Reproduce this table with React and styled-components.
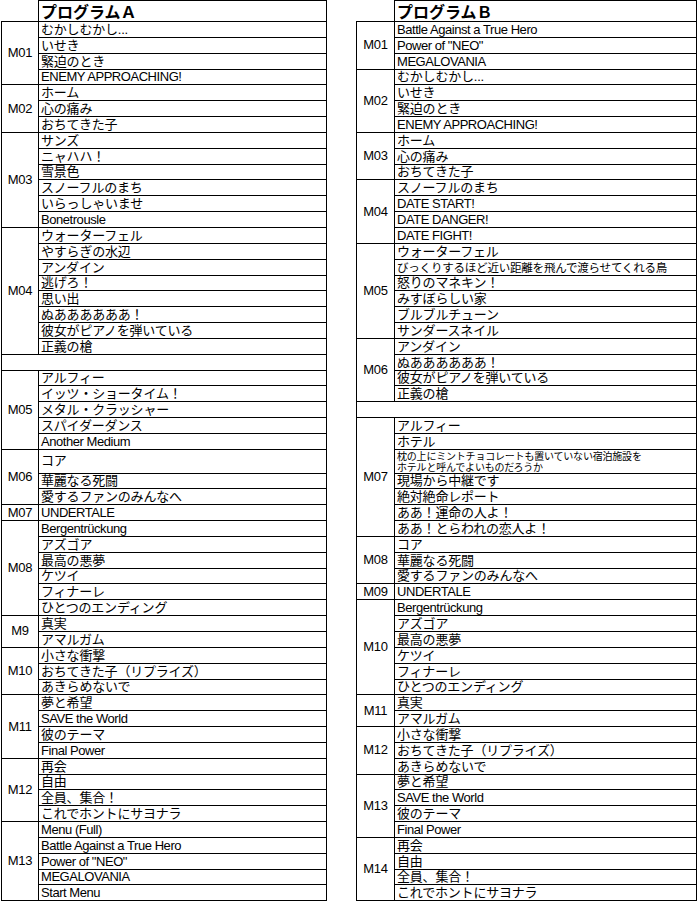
import React from "react";
import styled, { createGlobalStyle } from "styled-components";

const ROW = 15.85;

const GlobalStyle = createGlobalStyle`
  html, body {
    margin: 0;
    background: #fff;
  }
  body {
    font-family: "Liberation Sans", "Noto Sans CJK JP", sans-serif;
    color: #000;
  }
`;

const Page = styled.div`
  display: flex;
  align-items: flex-start;
  gap: 29px;
  padding-left: 1px;
`;

const Sheet = styled.table`
  border-collapse: collapse;
  table-layout: fixed;
`;

const Col = styled.col`
  width: ${(p) => p.$w}px;
`;

const HeadRow = styled.tr`
  height: 21px;
`;

const Corner = styled.td`
  border: none;
  padding: 0;
`;

const Title = styled.td`
  border: 1px solid #000;
  padding: 0 2px;
  font-family: "Noto Sans CJK JP", sans-serif;
  font-weight: 700;
  font-size: 16px;
  line-height: 18px;
  vertical-align: middle;
  white-space: nowrap;
`;

const Row = styled.tr`
  height: ${(p) => (p.$tall ? ROW * 1.5 : ROW)}px;
`;

const Label = styled.td`
  border: 1px solid #000;
  padding: 0;
  text-align: center;
  vertical-align: middle;
  font-family: "Liberation Sans", sans-serif;
  font-size: 13px;
  letter-spacing: -0.3px;
  line-height: 14px;
`;

const Gap = styled.td`
  border: 1px solid #000;
  padding: 0;
`;

const Item = styled.td`
  border: 1px solid #000;
  padding: 0 2px;
  vertical-align: ${(p) => (p.$middle ? "middle" : "bottom")};
  white-space: nowrap;
  overflow: hidden;
  font-size: ${(p) => (p.$size ? p.$size : 13)}px;
  letter-spacing: ${(p) => (p.$latin ? "-0.45px" : "-0.2px")};
  line-height: ${(p) => (p.$size && p.$size < 11 ? "11px" : "14px")};
`;

const isLatin = (t) => /^[\x20-\x7e\u00fc]+$/.test(t);

const programA = [
  { id: "M01", items: ["むかしむかし...", "いせき", "緊迫のとき", "ENEMY APPROACHING!"] },
  { id: "M02", items: ["ホーム", "心の痛み", "おちてきた子"] },
  { id: "M03", items: ["サンズ", "ニャハハ！", "雪景色", "スノーフルのまち", "いらっしゃいませ", "Bonetrousle"] },
  {
    id: "M04",
    items: ["ウォーターフェル", "やすらぎの水辺", "アンダイン", "逃げろ！", "思い出", "ぬああああああ！", "彼女がピアノを弾いている", "正義の槍"],
  },
  { blank: true },
  { id: "M05", items: ["アルフィー", "イッツ・ショータイム！", "メタル・クラッシャー", "スパイダーダンス", "Another Medium"] },
  { id: "M06", items: [{ t: "コア", tall: true, middle: true }, "華麗なる死闘", "愛するファンのみんなへ"] },
  { id: "M07", items: ["UNDERTALE"] },
  { id: "M08", items: ["Bergentrückung", "アズゴア", "最高の悪夢", "ケツイ", "フィナーレ", "ひとつのエンディング"] },
  { id: "M9", items: ["真実", "アマルガム"] },
  { id: "M10", items: ["小さな衝撃", "おちてきた子（リプライズ）", "あきらめないで"] },
  { id: "M11", items: ["夢と希望", "SAVE the World", "彼のテーマ", "Final Power"] },
  { id: "M12", items: ["再会", "自由", "全員、集合！", "これでホントにサヨナラ"] },
  { id: "M13", items: ["Menu (Full)", "Battle Against a True Hero", 'Power of "NEO"', "MEGALOVANIA", "Start Menu"] },
];

const programB = [
  { id: "M01", items: ["Battle Against a True Hero", 'Power of "NEO"', "MEGALOVANIA"] },
  { id: "M02", items: ["むかしむかし...", "いせき", "緊迫のとき", "ENEMY APPROACHING!"] },
  { id: "M03", items: ["ホーム", "心の痛み", "おちてきた子"] },
  { id: "M04", items: ["スノーフルのまち", "DATE START!", "DATE DANGER!", "DATE FIGHT!"] },
  {
    id: "M05",
    items: [
      "ウォーターフェル",
      { t: "びっくりするほど近い距離を飛んで渡らせてくれる鳥", size: 11.5 },
      "怒りのマネキン！",
      "みすぼらしい家",
      "ブルブルチューン",
      "サンダースネイル",
    ],
  },
  { id: "M06", items: ["アンダイン", "ぬああああああ！", "彼女がピアノを弾いている", "正義の槍"] },
  { blank: true },
  {
    id: "M07",
    items: [
      "アルフィー",
      "ホテル",
      {
        t: ["枕の上にミントチョコレートも置いていない宿泊施設を", "ホテルと呼んでよいものだろうか"],
        tall: true,
        size: 10,
      },
      "現場から中継です",
      "絶対絶命レポート",
      "ああ！運命の人よ！",
      "ああ！とらわれの恋人よ！",
    ],
  },
  { id: "M08", items: ["コア", "華麗なる死闘", "愛するファンのみんなへ"] },
  { id: "M09", items: ["UNDERTALE"] },
  { id: "M10", items: ["Bergentrückung", "アズゴア", "最高の悪夢", "ケツイ", "フィナーレ", "ひとつのエンディング"] },
  { id: "M11", items: ["真実", "アマルガム"] },
  { id: "M12", items: ["小さな衝撃", "おちてきた子（リプライズ）", "あきらめないで"] },
  { id: "M13", items: ["夢と希望", "SAVE the World", "彼のテーマ", "Final Power"] },
  { id: "M14", items: ["再会", "自由", "全員、集合！", "これでホントにサヨナラ"] },
];

const ProgramSheet = ({ title, groups, labelWidth, bodyWidth }) => (
  <Sheet>
    <colgroup>
      <Col $w={labelWidth} />
      <Col $w={bodyWidth} />
    </colgroup>
    <tbody>
      <HeadRow>
        <Corner />
        <Title>{title}</Title>
      </HeadRow>
      {groups.flatMap((g, gi) => {
        if (g.blank) {
          return [
            <Row key={gi}>
              <Gap colSpan={2} />
            </Row>,
          ];
        }
        return g.items.map((raw, i) => {
          const item = typeof raw === "string" ? { t: raw } : raw;
          const lines = Array.isArray(item.t) ? item.t : [item.t];
          return (
            <Row key={gi + "-" + i} $tall={item.tall}>
              {i === 0 && <Label rowSpan={g.items.length}>{g.id}</Label>}
              <Item $latin={isLatin(lines[0])} $size={item.size} $middle={item.middle}>
                {lines.map((l, li) => (
                  <React.Fragment key={li}>
                    {li > 0 && <br />}
                    {l}
                  </React.Fragment>
                ))}
              </Item>
            </Row>
          );
        });
      })}
    </tbody>
  </Sheet>
);

export default function App() {
  return (
    <>
      <GlobalStyle />
      <Page>
        <ProgramSheet title="プログラムＡ" groups={programA} labelWidth={37} bodyWidth={288} />
        <ProgramSheet title="プログラムＢ" groups={programB} labelWidth={38} bodyWidth={302} />
      </Page>
    </>
  );
}
